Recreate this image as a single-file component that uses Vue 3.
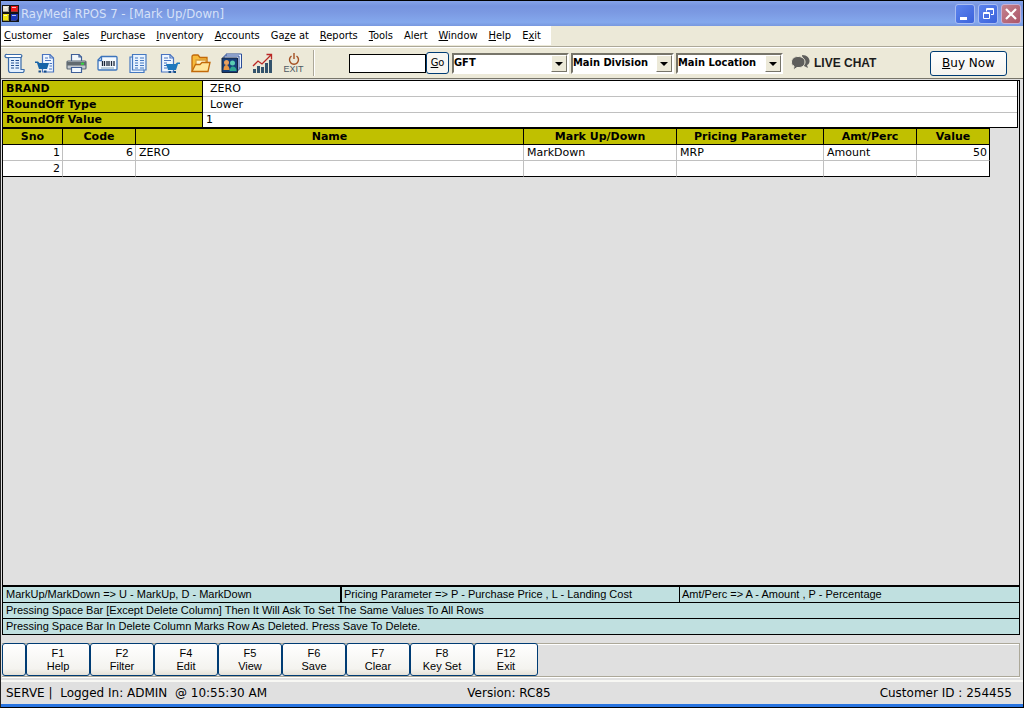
<script setup>
import { ref } from 'vue'

const menus = [
  ['', 'C', 'ustomer'], ['', 'S', 'ales'], ['', 'P', 'urchase'], ['', 'I', 'nventory'],
  ['', 'A', 'ccounts'], ['Ga', 'z', 'e at'], ['', 'R', 'eports'], ['', 'T', 'ools'],
  ['Alert', '', ''], ['', 'W', 'indow'], ['', 'H', 'elp'], ['E', 'x', 'it']
]
const search = ref('')
const combos = [
  { label: 'Company', value: 'GFT', cls: 'wide' },
  { label: 'Division', value: 'Main Division', cls: 'mid' },
  { label: 'Location', value: 'Main Location', cls: 'loc' }
]
const info = [
  { label: 'BRAND', value: 'ZERO', indent: true },
  { label: 'RoundOff Type', value: 'Lower', indent: true },
  { label: 'RoundOff Value', value: '1', indent: false }
]
const columns = ['Sno', 'Code', 'Name', 'Mark Up/Down', 'Pricing Parameter', 'Amt/Perc', 'Value']
const rows = [
  ['1', '6', 'ZERO', 'MarkDown', 'MRP', 'Amount', '50'],
  ['2', '', '', '', '', '', '']
]
const numeric = [0, 1, 6]
const keys = [
  ['F1', 'Help'], ['F2', 'Filter'], ['F4', 'Edit'], ['F5', 'View'],
  ['F6', 'Save'], ['F7', 'Clear'], ['F8', 'Key Set'], ['F12', 'Exit']
]
</script>

<template>
  <div class="window">
    <header class="titlebar">
      <svg class="logo" viewBox="0 0 17 17" aria-hidden="true">
        <rect width="17" height="17" fill="#141414" />
        <path d="M1 1h6v6H1z" fill="#e8e4d4" /><path d="M9 1h7v6h-7z" fill="#f01818" />
        <path d="M1 9h6v7H1z" fill="#f2e512" /><path d="M9 9h7v5l-2 2h-5z" fill="#1c36b8" />
        <path d="M1 6.500h5.500V2M9 6.500h6.500V2M1 15.500h5.500V10M9 15.500h4.500l2-2V10" fill="none" stroke="#555" stroke-opacity=".5" />
        <path d="M2 2.500h3M10 2.500h4M2 10.500h3M10 10.500h4" stroke="#fff" stroke-opacity=".7" />
      </svg>
      <h1>RayMedi RPOS 7 - [Mark Up/Down]</h1>
      <div class="winbtns">
        <button type="button" aria-label="Minimize">
          <svg viewBox="0 0 18 18"><path d="M4 12h7v3H4z" fill="#fff" /></svg>
        </button>
        <button type="button" aria-label="Restore">
          <svg viewBox="0 0 18 18" fill="none" stroke="#fff"><path d="M7.500 6.500V3.500h7v6H12M7 4.500h8M4.500 7.500h6v6h-6zM4 8.500h7" /></svg>
        </button>
        <button type="button" class="close" aria-label="Close">
          <svg viewBox="0 0 18 18"><path d="M4 4l10 10M14 4L4 14" stroke="#fff" stroke-width="2.200" /></svg>
        </button>
      </div>
    </header>

    <nav class="menubar">
      <div class="menus">
        <button v-for="m in menus" :key="m.join('')" type="button">{{ m[0] }}<u>{{ m[1] }}</u>{{ m[2] }}</button>
      </div>
    </nav>

    <div class="toolbar">
      <button type="button" class="tool" aria-label="Bill">
        <svg viewBox="0 0 21 21" fill="none" stroke="#3a6ba8" stroke-width="1.200">
          <path d="M4.500 4.500V17q0 2.500 2 2.500H19q1.500-1 1-3h-3V4" fill="#e2f0ff" /><path d="M1 3.500Q1 1 3 1.500h13.500Q19 2 17 4.500H4.500Q1.500 5 1 3.500z" fill="#fff" />
          <path d="M7 7.500h3M11.500 7.500H15M7 10h3M11.500 10H15M7 12.500h3M11.500 12.500H15M7 15h3M11.500 15H15" stroke="#224f91" />
        </svg>
      </button>
      <button type="button" class="tool" aria-label="Sales cart">
        <svg viewBox="0 0 21 21" fill="none" stroke="#4a74c0" stroke-width="1.200">
          <path d="M7.500 1.500H15l3.500 3.500v14h-11z" fill="#eef6ff" /><path d="M15 1.500V5h3.500M10 5h3M10 7.500h6M14.500 10.500H17M14.500 13H17M14 16h3" />
          <path d="M0 8.500h3l1.500 1.500h9.500l-2 6H4L2 10H0z" fill="#1764a8" stroke="none" /><path d="M3.500 17.500h2.500v2H3.500zM9 17.500h2.500v2H9z" fill="#164d86" stroke="none" />
        </svg>
      </button>
      <button type="button" class="tool" aria-label="Print">
        <svg viewBox="0 0 21 21" stroke="#3f5f98" stroke-width="1.200">
          <path d="M5.500 8V1.500H13L15.500 4v4" fill="#f1f6fa" /><path d="M13 1.500V4h2.500" fill="none" />
          <rect x="1" y="8" width="19" height="8" rx="1" fill="#c4c9ce" stroke="#5d6a77" /><path d="M1 9h19v3.500H1z" fill="#626a70" stroke="none" /><path d="M15 10.700h3" stroke="#35d63e" stroke-width="2" />
          <path d="M5.500 14.500h10v5h-10z" fill="#f4faff" />
        </svg>
      </button>
      <button type="button" class="tool" aria-label="Barcode">
        <svg viewBox="0 0 21 21" fill="none" stroke="#3c74bc" stroke-width="1.300">
          <path d="M1 7l3.500-3.500H19q1 0 1 1V16q0 1-1 1H2q-1 0-1-1z" fill="#f4faff" />
          <path d="M1 7.500h3.500v-4" /><path d="M5.500 8v5M7.500 8v5M10 8v5M12 8v5M14.500 8v5M17 8v5" stroke="#1b2738" />
          <path d="M4 15h13" stroke="#9bb6ca" />
        </svg>
      </button>
      <button type="button" class="tool" aria-label="Report">
        <svg viewBox="0 0 21 21" fill="none" stroke="#4478c0" stroke-width="1.200">
          <path d="M4.500 1.500H18V17h-2v2.500H2V4h2.500z" fill="#e7f2ff" /><path d="M4.500 3.500V17H16" />
          <path d="M7 5h3M12 5h4M7 7.500h3M12 7.500h4M7 10h3M12 10h4M7 12.500h3M12 12.500h4M7 15h3M12 15h4" />
        </svg>
      </button>
      <button type="button" class="tool" aria-label="Purchase cart">
        <svg viewBox="0 0 21 21" fill="none" stroke="#4a74c0" stroke-width="1.200">
          <path d="M2.500 1.500h8.500L14.500 5v14h-12z" fill="#eef6ff" /><path d="M11 1.500V5h3.500M5 5h4M5 7.500h7M5 10h3M5 12.500h3M5 15h3" />
          <path d="M21 9.500h-3L16.500 11H7l2 6h8l2-6h2z" fill="#1f78bd" stroke="none" /><path d="M9.500 18H12v2H9.500zM14.500 18H17v2h-2.500z" fill="#174f86" stroke="none" />
        </svg>
      </button>
      <button type="button" class="tool" aria-label="Open">
        <svg viewBox="0 0 21 21" stroke="#c26a0a" stroke-width="1.300">
          <path d="M2 18V4q0-2 2-2h4l2 2.500h7V17z" fill="#f7bb3b" /><path d="M6 7h10v6H6z" fill="#fff6d0" stroke="#d89d3d" />
          <path d="M2 18.500l3.500-7H10l2-2h8l-2 9z" fill="#ffe59a" />
        </svg>
      </button>
      <button type="button" class="tool" aria-label="Users">
        <svg viewBox="0 0 21 21">
          <path d="M5 3V1h15.500v14H18M3 5V3h15v14h-2" fill="#edf4ff" stroke="#2a4c98" /><path d="M1 5h15.500v14.500H1z" fill="#153e7a" stroke="#17243e" />
          <circle cx="5.500" cy="9.500" r="2.500" fill="#eba05e" /><path d="M2.500 17q0-5 3-5 2 0 3 4v1z" fill="#e99543" />
          <circle cx="11.500" cy="10" r="2.500" fill="#58cdb2" /><path d="M8.500 17.500q1-4 3-4 4 0 4 4.500h-7z" fill="#2da690" />
        </svg>
      </button>
      <button type="button" class="tool" aria-label="Chart">
        <svg viewBox="0 0 21 21" fill="none">
          <path d="M2.500 16v4M6.500 13v7M10.500 14v6M14.500 10v10M18.500 7v13" stroke="#34536c" stroke-width="3" />
          <path d="M1 13l5-5 4 3 9-9M14.500 1.500h5v5" stroke="#b92725" stroke-width="1.300" />
        </svg>
      </button>
      <button type="button" class="tool exit">
        <svg viewBox="0 0 12 12" fill="none" stroke="#a45022" stroke-width="1.400"><path d="M3.500 3a4.500 4.500 0 1 0 5 0M6 0v6" /></svg>
        <span>EXIT</span>
      </button>
      <span class="sep"></span>
      <input v-model="search" class="search" type="text" aria-label="Search">
      <button type="button" class="go"><u>G</u>o</button>
      <span v-for="c in combos" :key="c.label" class="combo" :class="c.cls">
        <select :aria-label="c.label"><option>{{ c.value }}</option></select>
        <i class="arrow"></i>
      </span>
      <a class="chat" href="#">
        <svg viewBox="0 0 19 16" aria-hidden="true">
          <path d="M11 0c9 0 9 9 5 10l1 3-4-2z" fill="#5e5e5c" />
          <path d="M7 1.500c4 0 7 2 7 5.500s-3 5.500-6 5.500H6L2.500 15l.5-4C1 10.500.5 9 .5 7 .5 3.500 3.500 1.500 7 1.500z" fill="#5e5e5c" stroke="#ece9d8" />
        </svg>
        LIVE CHAT
      </a>
      <button type="button" class="buy"><u>B</u>uy Now</button>
    </div>

    <main class="work">
      <table class="info">
        <colgroup><col class="c-label"><col></colgroup>
        <tbody>
          <tr v-for="r in info" :key="r.label">
            <th scope="row">{{ r.label }}</th>
            <td :class="{ indent: r.indent }">{{ r.value }}</td>
          </tr>
        </tbody>
      </table>
      <div class="pane">
        <table class="grid">
          <colgroup>
            <col class="c-sno"><col class="c-code"><col><col class="c-mark"><col class="c-price"><col class="c-amt"><col class="c-val">
          </colgroup>
          <thead><tr><th v-for="c in columns" :key="c" scope="col">{{ c }}</th></tr></thead>
          <tbody>
            <tr v-for="r in rows" :key="r[0]">
              <td v-for="(v, i) in r" :key="i" :class="{ num: numeric.includes(i) }">{{ v }}</td>
            </tr>
          </tbody>
        </table>
      </div>
      <section class="legend">
        <div class="hints">
          <span>MarkUp/MarkDown =&gt; U - MarkUp, D - MarkDown</span>
          <span>Pricing Parameter =&gt; P - Purchase Price , L - Landing Cost</span>
          <span>Amt/Perc =&gt; A - Amount , P - Percentage</span>
        </div>
        <p>Pressing Space Bar [Except Delete Column] Then It Will Ask To Set The Same Values To All Rows</p>
        <p>Pressing Space Bar In Delete Column Marks Row As Deleted. Press Save To Delete.</p>
      </section>
      <div class="keys">
        <button type="button" class="blank" aria-label="More"></button>
        <button v-for="k in keys" :key="k[0]" type="button">{{ k[0] }}<br>{{ k[1] }}</button>
      </div>
    </main>

    <footer class="status">
      <span>SERVE |&nbsp; Logged In: ADMIN&nbsp; @ 10:55:30 AM</span>
      <span>Version: RC85</span>
      <span>Customer ID : 254455</span>
    </footer>
  </div>
</template>

<style>
body { margin: 0; background: #e0e0e0; }
</style>

<style scoped>
* { box-sizing: border-box; }
button, input, select { font: inherit; color: inherit; margin: 0; padding: 0; }
button { border: 0; background: none; white-space: nowrap; }
svg { display: block; }
.window {
  display: flex; flex-direction: column; min-height: 100vh;
  border: 1px solid #000; border-left-color: #222;
  background: #e0e0e0; color: #000;
  font: 11px/14px "DejaVu Sans Condensed", "DejaVu Sans", Tahoma, sans-serif;
}
.titlebar {
  display: flex; align-items: center; height: 25px; padding: 0 2px 0 1px;
  background: linear-gradient(#85a3e9 0, #7694df 20%, #7b99e2 45%, #84a8ed 85%, #7898df);
}
.logo { width: 17px; height: 17px; }
h1 { margin: 0 auto 0 2px; font-size: 13px; line-height: 18px; font-weight: 400; color: #d6e1f8; }
.winbtns { display: flex; gap: 3px; }
.winbtns button { width: 20px; height: 20px; border: 1px solid #a9bdf2; border-radius: 3px; background: linear-gradient(135deg, #5c84ee, #3b62db); }
.winbtns svg { width: 18px; height: 18px; }
.winbtns .close { background: linear-gradient(135deg, #c4838f, #ac5568); border-color: #c6b0d5; }
.menubar { background: #ece9d8; border-bottom: 1px solid #aca899; height: 21px; }
.menus { display: flex; align-items: center; gap: 11px; width: 550px; height: 19px; padding-left: 3px; background: #fff; }
.toolbar {
  display: flex; align-items: center; height: 32px;
  background: #ece9d8; border-top: 1px solid #fff; border-bottom: 1px solid #77756a;
}
.tool { flex: none; display: flex; justify-content: center; width: 31px; padding-right: 4px; }
.tool svg { width: 21px; height: 21px; }
.exit { flex-direction: column; align-items: center; font: 9px/9px "Liberation Sans", Arial, sans-serif; color: #4d5963; }
.exit svg { width: 12px; height: 12px; }
.sep { width: 2px; height: 26px; margin: 0 34px 0 2px; border-left: 1px solid #aca899; border-right: 1px solid #fff; }
.search { width: 77px; height: 19px; border: 1px solid #000; background: #fff; }
.go { width: 23px; height: 22px; margin: 0 3px 0 0; border: 1px solid #003c74; border-radius: 3px; background: #f7f6f2; }
.combo { position: relative; height: 21px; margin-right: 2px; border: 2px solid #77756a; border-right-color: #fff; border-bottom-color: #fff; background: #fff; }
.combo.wide { width: 117px; }
.combo.mid { width: 103px; }
.combo.loc { width: 107px; }
.combo select { display: block; width: 100%; height: 17px; appearance: none; border: 0; background: #fff; font-weight: 700; }
.arrow {
  position: absolute; top: 0; right: 0; width: 16px; height: 17px; pointer-events: none;
  background: #ece9d8; border: 1px solid #fff; border-right-color: #77756a; border-bottom-color: #77756a;
}
.arrow::after { content: ""; position: absolute; left: 3px; top: 6px; border: 4px solid transparent; border-top-color: #000; border-bottom: 0; }
.chat { display: flex; align-items: center; gap: 4px; margin-left: 6px; font: 700 12px/16px "Liberation Sans", Arial, sans-serif; color: #1c1c1c; text-decoration: none; white-space: nowrap; }
.chat svg { width: 19px; height: 16px; }
.buy { width: 77px; height: 25px; margin: 0 16px 0 auto; border: 1px solid #003c74; border-radius: 3px; background: linear-gradient(#fff, #f4f3ee); font: 12px/16px "DejaVu Sans", Verdana, sans-serif; }

.work { flex: 1; display: flex; flex-direction: column; padding: 1px 3px 3px 1px; }
table { border-collapse: separate; border-spacing: 0; table-layout: fixed; font: 11px/14px "DejaVu Sans", Verdana, sans-serif; }
th, td { height: 16px; padding: 0 3px; text-align: left; white-space: nowrap; background: #fff; }
th { background: #c0c000; border-bottom: 1px solid #000; border-right: 1px solid #000; }
td { border-bottom: 1px solid #c0c0c0; }
.info { width: 100%; border: 1px solid #000; border-bottom: 0; border-right: 3px double #000; }
.info .indent { padding-left: 7px; }
.info tr:last-child th, .info tr:last-child td { height: 15px; border-bottom-color: #000; }
.c-label { width: 200px; }
.pane { flex: 1; padding-right: 29px; border: solid #000; border-width: 0 1px 0 1px; }
.grid { width: 100%; }
.grid th { text-align: center; }
.grid thead th { border-top: 1px solid #000; height: 17px; }
.grid td { border-right: 1px solid #c0c0c0; }
.grid td:last-child { border-right-color: #000; }
.grid tr:last-child td { border-bottom-color: #000; }
.grid .num { text-align: right; padding-right: 2px; }
.c-sno { width: 60px; }
.c-code { width: 73px; }
.c-mark { width: 153px; }
.c-price { width: 147px; }
.c-amt { width: 93px; }
.c-val { width: 73px; }

.legend { border: 1px solid #000; border-top-width: 2px; border-bottom: 0; background: #c0e0e0; font: 11px/15px "Liberation Sans", Arial, sans-serif; }
.hints { display: grid; grid-template-columns: 337fr 339fr 340fr; border-bottom: 1px solid #000; }
.hints span { padding-left: 3px; }
.hints span + span { border-left: 1px solid #000; padding-left: 2px; }
.hints span:nth-child(2) { border-left-width: 2px; }
.legend p { margin: 0; padding-left: 3px; border-bottom: 1px solid #000; }
.keys { display: flex; height: 34px; margin-top: 8px; border: 1px solid #aca899; border-left: 0; box-shadow: 0 1px 0 #fff, inset 0 1px 0 #fff; }
.keys button { width: 64px; height: 33px; margin-top: -1px; border: 1px solid #003c74; border-radius: 3px; background: linear-gradient(#fff, #f4f3ef 80%, #e4e1d8); font: 11px/13px "Liberation Sans", Arial, sans-serif; }
.keys .blank { width: 24px; }
.status {
  display: grid; grid-template-columns: 1fr auto 1fr; align-items: center; height: 27px; padding: 0 11px 0 5px;
  border-top: 2px solid #f8f8f4; border-bottom: 3px solid #2874e0; font: 12px/16px "DejaVu Sans", Verdana, sans-serif;
}
.status span:last-child { text-align: right; }
</style>
